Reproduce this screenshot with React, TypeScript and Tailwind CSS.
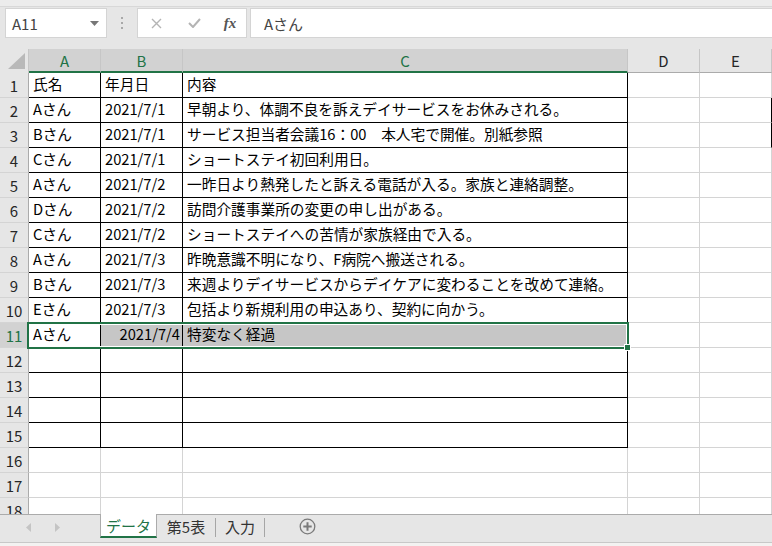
import React from 'react';

const FONT = { fontFamily: '"Noto Sans CJK JP", "Noto Sans", sans-serif' };

const colWidths = ['w-[72px]', 'w-[82px]', 'w-[445px]', 'w-[72px]', 'w-[72px]'];
const colNames = ['A', 'B', 'C', 'D', 'E'];

// sheet rows: [name, date, content]
const rows: string[][] = [
  ['氏名', '年月日', '内容'],
  ['Aさん', '2021/7/1', '早朝より、体調不良を訴えデイサービスをお休みされる。'],
  ['Bさん', '2021/7/1', 'サービス担当者会議16：00　本人宅で開催。別紙参照'],
  ['Cさん', '2021/7/1', 'ショートステイ初回利用日。'],
  ['Aさん', '2021/7/2', '一昨日より熱発したと訴える電話が入る。家族と連絡調整。'],
  ['Dさん', '2021/7/2', '訪問介護事業所の変更の申し出がある。'],
  ['Cさん', '2021/7/2', 'ショートステイへの苦情が家族経由で入る。'],
  ['Aさん', '2021/7/3', '昨晩意識不明になり、F病院へ搬送される。'],
  ['Bさん', '2021/7/3', '来週よりデイサービスからデイケアに変わることを改めて連絡。'],
  ['Eさん', '2021/7/3', '包括より新規利用の申込あり、契約に向かう。'],
  ['Aさん', '2021/7/4', '特変なく経過'],
];

function FormulaBar() {
  return (
    <div className="h-[49px] bg-[#e6e6e6] flex flex-col">
      <div className="h-[7px] bg-[#ececec] border-b border-[#d8d8d8]" />
      <div className="flex items-start pt-px">
        <div className="ml-[5px] w-[102px] h-[30px] bg-white border border-[#d4d4d4] flex items-center justify-between pl-[6px] pr-[7px]">
          <span className="text-[15px] text-[#444] leading-none">A11</span>
          <svg width="9" height="5" viewBox="0 0 9 5">
            <polygon points="0,0 9,0 4.5,5" fill="#777" />
          </svg>
        </div>
        <div className="w-[30px] h-[30px] flex flex-col items-center justify-center gap-[3px]">
          <span className="w-[2px] h-[2px] bg-[#a8a8a8]" />
          <span className="w-[2px] h-[2px] bg-[#a8a8a8]" />
          <span className="w-[2px] h-[2px] bg-[#a8a8a8]" />
        </div>
        <div className="w-[110px] h-[30px] bg-white border border-[#d4d4d4] flex items-center">
          <div className="w-[37px] flex justify-center">
            <svg width="11" height="11" viewBox="0 0 11 11">
              <path d="M1 1 L10 10 M10 1 L1 10" stroke="#b4b4b4" strokeWidth="1.4" />
            </svg>
          </div>
          <div className="w-[39px] flex justify-center">
            <svg width="13" height="10" viewBox="0 0 13 10">
              <path d="M1 5 L5 9 L12 1" stroke="#b4b4b4" strokeWidth="2" fill="none" />
            </svg>
          </div>
          <div className="w-[32px] flex justify-center">
            <span
              className="text-[15px] italic font-bold text-[#555] leading-none"
              style={{ fontFamily: '"Liberation Serif", serif' }}
            >
              fx
            </span>
          </div>
        </div>
        <div className="ml-[3px] flex-1 h-[30px] bg-white border border-[#d4d4d4] border-r-0 flex items-center pl-[13px]">
          <span className="text-[15px] text-[#444] leading-none">Aさん</span>
        </div>
      </div>
    </div>
  );
}

function ColumnHeaders() {
  return (
    <div className="flex h-[24px]">
      <div className="w-[29px] h-[24px] bg-[#e6e6e6] border-r border-[#c6c6c6] relative">
        <svg width="29" height="24" viewBox="0 0 29 24" className="absolute left-0 top-0">
          <polygon points="25,4 25,20 8,20" fill="#b9b9b9" />
        </svg>
      </div>
      {colNames.map((name, i) => {
        const sel = i <= 2;
        return (
          <div
            key={name}
            className={
              colWidths[i] +
              ' h-[24px] flex items-center justify-center border-r border-[#c6c6c6] text-[15px] leading-none ' +
              (sel
                ? 'bg-[#d2d2d2] text-[#217346] border-b-2 border-b-[#217346]'
                : 'bg-[#e6e6e6] text-[#262626] border-b border-b-[#ababab]')
            }
          >
            {name}
          </div>
        );
      })}
    </div>
  );
}

function Cell({ r, c }: { r: number; c: number }) {
  const inTable = r <= 15 && c <= 2;
  const edgeBlack = c === 4 && (r === 2 || r === 3);
  const right = inTable || edgeBlack ? 'border-r-black' : 'border-r-[#d4d4d4]';
  const bottom = inTable ? 'border-b-black' : 'border-b-[#d4d4d4]';
  const hilite = r === 11 && (c === 1 || c === 2);
  const value = r <= 11 && c <= 2 ? rows[r - 1][c] : '';
  const alignRight = r === 11 && c === 1;
  return (
    <div
      className={
        colWidths[c] +
        ' h-[25px] shrink-0 border-r border-b flex items-center whitespace-nowrap overflow-visible text-[14.7px] leading-none text-black ' +
        right +
        ' ' +
        bottom +
        ' ' +
        (hilite ? 'bg-[#c6c6c6] ' : 'bg-white ') +
        (alignRight ? 'justify-end pr-[2px]' : 'pl-[4px]')
      }
    >
      <span className="pb-px">{value}</span>
    </div>
  );
}

function Sheet() {
  const rowNums = Array.from({ length: 18 }, (_, i) => i + 1);
  return (
    <div className="relative h-[441px] overflow-hidden bg-white">
      {rowNums.map((r) => (
        <div key={r} className="flex">
          <div
            className={
              'w-[29px] h-[25px] shrink-0 flex items-center justify-center border-r border-b border-r-[#ababab] border-b-[#d4d4d4] text-[15px] leading-none ' +
              (r === 11 ? 'bg-[#d2d2d2] text-[#217346]' : 'bg-[#e6e6e6] text-[#262626]')
            }
          >
            {r}
          </div>
          {[0, 1, 2, 3, 4].map((c) => (
            <Cell key={c} r={r} c={c} />
          ))}
        </div>
      ))}
      {/* selection A11:C11 */}
      <div className="absolute left-[27px] top-[249px] w-[602px] h-[27px] border-2 border-[#217346] shadow-[inset_0_0_0_1px_white] pointer-events-none" />
      <div className="absolute left-[624px] top-[271px] w-[7px] h-[7px] bg-[#217346] border border-white" />
    </div>
  );
}

function SheetTabs() {
  return (
    <div className="flex flex-col">
      <div className="h-[28px] bg-[#e6e6e6] border-t border-[#ababab] flex items-start">
        <div className="w-[100px] h-[24px] flex items-center">
          <svg width="6" height="9" viewBox="0 0 6 9" className="ml-[26px]">
            <polygon points="5,0 5,9 0,4.5" fill="#c4c4c4" />
          </svg>
          <svg width="6" height="9" viewBox="0 0 6 9" className="ml-[22px]">
            <polygon points="1,0 1,9 6,4.5" fill="#c4c4c4" />
          </svg>
        </div>
        <div className="-mt-px w-[57px] h-[24px] bg-white border-x border-[#ababab] border-b-2 border-b-[#217346] flex items-center justify-center text-[15px] leading-none text-[#217346]">
          データ
        </div>
        <div className="w-[58px] h-[23px] flex items-center justify-center text-[15px] leading-none text-[#333]">
          第5表
        </div>
        <span className="w-px h-[19px] mt-[3px] bg-[#a6a6a6]" />
        <div className="w-[48px] h-[23px] flex items-center justify-center text-[15px] leading-none text-[#333]">
          入力
        </div>
        <span className="w-px h-[19px] mt-[3px] bg-[#a6a6a6]" />
        <div className="ml-[34px] h-[23px] flex items-center">
          <svg width="17" height="17" viewBox="0 0 17 17">
            <circle cx="8.5" cy="8.5" r="7.3" fill="none" stroke="#7a7a7a" strokeWidth="1.3" />
            <path d="M8.5 4.3 V12.7 M4.3 8.5 H12.7" stroke="#7a7a7a" strokeWidth="2" />
          </svg>
        </div>
      </div>
      <div className="h-[4px] bg-[#f3f2f1] border-t border-[#c8c8c8]" />
    </div>
  );
}

export default function App() {
  return (
    <div className="w-[772px] h-[546px] overflow-hidden bg-white" style={FONT}>
      <FormulaBar />
      <ColumnHeaders />
      <Sheet />
      <SheetTabs />
    </div>
  );
}
